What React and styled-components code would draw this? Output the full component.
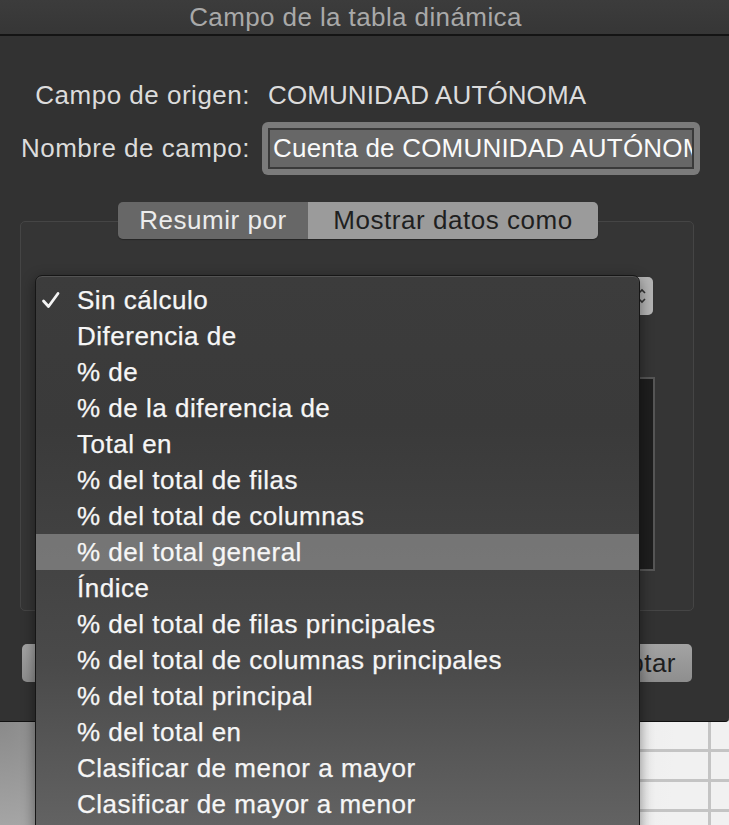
import React from "react";
import styled, { createGlobalStyle } from "styled-components";

const GlobalStyle = createGlobalStyle`
  html, body {
    margin: 0;
    padding: 0;
    background: #e6e6e6;
    font-family: "Liberation Sans", Arial, sans-serif;
    overflow: hidden;
  }
`;

const options = [
  "Sin cálculo",
  "Diferencia de",
  "% de",
  "% de la diferencia de",
  "Total en",
  "% del total de filas",
  "% del total de columnas",
  "% del total general",
  "Índice",
  "% del total de filas principales",
  "% del total de columnas principales",
  "% del total principal",
  "% del total en",
  "Clasificar de menor a mayor",
  "Clasificar de mayor a menor",
];

const App = () => {
  return (
    <Page>
      <GlobalStyle />
      <Window>
        <TitleBar>Campo de la tabla dinámica</TitleBar>
        <Body>
          <Form>
            <Label>Campo de origen:</Label>
            <Value>COMUNIDAD AUTÓNOMA</Value>
            <Label>Nombre de campo:</Label>
            <FieldRing>
              <Field>Cuenta de COMUNIDAD AUTÓNOMA</Field>
            </FieldRing>
          </Form>

          <Group>
            <Segments>
              <Segment>Resumir por</Segment>
              <Segment selected>Mostrar datos como</Segment>
            </Segments>
            <GroupInner>
              <PopupButton>
                <Stepper>
                  <svg width="10" height="22" viewBox="0 0 10 22">
                    <path d="M2 8 L5 5 L8 8 M2 14 L5 17 L8 14" stroke="#333" strokeWidth="1.6" fill="none" />
                  </svg>
                </Stepper>
              </PopupButton>
              <ListBox />
            </GroupInner>
          </Group>

          <Buttons>
            <Button>Cancelar</Button>
            <Button primary>Aceptar</Button>
          </Buttons>
        </Body>

        <Menu>
          {options.map((o, i) => (
            <MenuItem key={o} active={i === 7}>
              <Check>
                {i === 0 && (
                  <svg width="20" height="18" viewBox="0 0 20 18">
                    <path d="M2.5 10 L7.5 15.5 L17 2.5" stroke="#f4f4f4" strokeWidth="2.8" fill="none" strokeLinecap="round" strokeLinejoin="round" />
                  </svg>
                )}
              </Check>
              {o}
            </MenuItem>
          ))}
        </Menu>
      </Window>
      <Sheet>
        <Cells>
          {Array.from({ length: 12 }).map((_, i) => (
            <Cell key={i} />
          ))}
        </Cells>
      </Sheet>
    </Page>
  );
};

const Page = styled.div`
  width: 729px;
  height: 825px;
  display: flex;
  flex-direction: column;
  position: relative;
  overflow: hidden;
`;

const Window = styled.div`
  height: 722px;
  flex-shrink: 0;
  box-sizing: border-box;
  background: #323232;
  border-bottom: 1px solid #111;
  border-bottom-right-radius: 4px;
  display: flex;
  flex-direction: column;
  position: relative;
`;

const TitleBar = styled.div`
  height: 34px;
  flex-shrink: 0;
  background: linear-gradient(#3c3c3c, #363636);
  border-bottom: 2px solid #141414;
  color: #a9a9a9;
  font-size: 26px;
  letter-spacing: 0.4px;
  display: flex;
  align-items: center;
  justify-content: center;
  padding-right: 18px;
`;

const Body = styled.div`
  flex: 1;
  display: flex;
  flex-direction: column;
  align-items: flex-start;
  padding: 0 35px 0 20px;
  & > * {
    flex-shrink: 0;
  }
`;

const Form = styled.div`
  display: grid;
  grid-template-columns: 232px 1fr;
  column-gap: 12px;
  row-gap: 11px;
  align-items: center;
  margin-top: 43px;
`;

const Label = styled.div`
  text-align: right;
  color: #dcdcdc;
  font-size: 26px;
  letter-spacing: 0.5px;
  white-space: nowrap;
  padding-right: 2px;
`;

const Value = styled.div`
  color: #dcdcdc;
  font-size: 26px;
  letter-spacing: 0.1px;
  height: 32px;
  line-height: 32px;
  padding-left: 4px;
  white-space: nowrap;
`;

const FieldRing = styled.div`
  width: 438px;
  margin-left: -2px;
  height: 53px;
  box-sizing: border-box;
  border-radius: 6px;
  background: #7b7b7b;
  padding: 6px;
  display: flex;
`;

const Field = styled.div`
  flex: 1;
  background: #676767;
  border: 2px solid #3a3a3a;
  color: #fafafa;
  font-size: 26px;
  letter-spacing: 0.2px;
  line-height: 37px;
  padding-left: 3px;
  white-space: nowrap;
  overflow: hidden;
`;

const Group = styled.div`
  margin-top: 46px;
  width: 674px;
  height: 390px;
  box-sizing: border-box;
  border: 1px solid #454545;
  border-radius: 5px;
  background: #353535;
  display: flex;
  flex-direction: column;
  align-items: center;
`;

const Segments = styled.div`
  margin-top: -20px;
  margin-left: 2px;
  display: flex;
  height: 37px;
  border-radius: 5px;
  overflow: hidden;
  box-shadow: 0 1px 1px rgba(0, 0, 0, 0.3);
`;

const Segment = styled.div`
  height: 37px;
  line-height: 37px;
  width: ${(p) => (p.selected ? "290px" : "190px")};
  box-sizing: border-box;
  text-align: center;
  font-size: 26px;
  letter-spacing: 0.55px;
  white-space: nowrap;
  background: ${(p) => (p.selected ? "#9b9b9b" : "#676767")};
  color: ${(p) => (p.selected ? "#1f1f1f" : "#ececec")};
`;

const GroupInner = styled.div`
  align-self: stretch;
  display: flex;
  flex-direction: column;
  align-items: flex-end;
  padding-right: 40px;
`;

const PopupButton = styled.div`
  margin-top: 38px;
  width: 590px;
  height: 38px;
  border-radius: 5px;
  background: #5a5a5a;
  display: flex;
  justify-content: flex-end;
`;

const Stepper = styled.div`
  width: 22px;
  height: 38px;
  border-radius: 0 5px 5px 0;
  background: #b4b4b4;
  display: flex;
  align-items: center;
  justify-content: center;
`;

const ListBox = styled.div`
  margin-top: 62px;
  margin-right: -2px;
  width: 592px;
  height: 194px;
  box-sizing: border-box;
  border: 2px solid #565656;
  background: #1e1e1e;
`;

const Buttons = styled.div`
  margin-top: 33px;
  display: flex;
  justify-content: space-between;
  padding: 0 2px;
  width: 674px;
  box-sizing: border-box;
`;

const Button = styled.div`
  width: ${(p) => (p.primary ? "150px" : "170px")};
  height: 38px;
  line-height: 38px;
  border-radius: 5px;
  box-sizing: border-box;
  text-align: ${(p) => (p.primary ? "right" : "center")};
  padding-right: ${(p) => (p.primary ? "16px" : "0")};
  letter-spacing: 0.5px;
  font-size: 26px;
  color: #1e1e1e;
  background: linear-gradient(#a3a3a3, #8e8e8e);
`;

const Menu = styled.div`
  position: absolute;
  left: 35px;
  top: 275px;
  width: 605px;
  height: 600px;
  box-sizing: border-box;
  padding-top: 6px;
  border: 1px solid #161616;
  border-radius: 7px;
  background: linear-gradient(#3c3c3c 0%, #3a3a3a 25%, #4a4a4a 65%, #6a6a6a 100%);
  box-shadow: 0 4px 14px rgba(0, 0, 0, 0.45), inset 0 1px 0 rgba(255, 255, 255, 0.12);
  z-index: 5;
`;

const MenuItem = styled.div`
  height: 36px;
  display: flex;
  align-items: center;
  color: #f6f6f6;
  font-size: 26px;
  letter-spacing: 0.5px;
  -webkit-text-stroke: 0.25px #f6f6f6;
  white-space: nowrap;
  background: ${(p) => (p.active ? "rgba(160, 160, 160, 0.55)" : "transparent")};
`;

const Check = styled.div`
  width: 41px;
  padding-left: 5px;
  box-sizing: border-box;
  display: flex;
  align-items: center;
`;

const Sheet = styled.div`
  flex: 1;
  background: radial-gradient(circle at 0 0, #8a8a8a, #d9d9d9 40%, #f1f1f1 90%);
  display: flex;
  justify-content: flex-end;
`;

const Cells = styled.div`
  width: 90px;
  display: grid;
  grid-template-columns: 72px 18px;
  grid-auto-rows: 30px;
`;

const Cell = styled.div`
  border-right: 3px solid #c4c4c4;
  border-bottom: 3px solid #c4c4c4;
  &:nth-child(2n) {
    border-right: none;
  }
`;

export default App;
